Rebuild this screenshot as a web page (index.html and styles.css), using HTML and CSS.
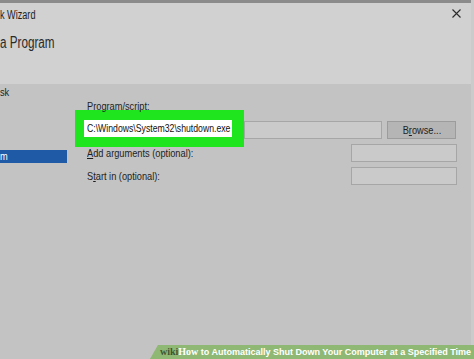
FILE: index.html
```html
<!DOCTYPE html>
<html>
<head>
<title>Create Basic Task Wizard</title>
<link rel="stylesheet" href="styles.css">
</head>
<body>

<div class="wnd">
<div class="wnd_top"></div>
<div class="wnd_hdr">
<div class="wnd_ttl"><span class="sq">k Wizard</span><svg class="wnd_x" width="9" height="9" viewBox="0 0 9 9"><path d="M0.5 0.5L8.5 8.5M8.5 0.5L0.5 8.5" stroke="#2b2b2b" stroke-width="1.1"/></svg></div>
<div class="wnd_h1"><span class="sq">a Program</span></div>
</div>

<div class="wnd_main">
<div class="nav">
<div class="nav_item"><span class="sq">sk</span></div>
<div class="nav_item nav_sel"><span class="sq">m</span></div>
</div>

<div class="frm">
<div class="frm_lbl"><span class="sq">Program/script:</span></div>
<div class="frm_row">
<div class="hl"><div class="hl_fld"><span class="sq">C:\Windows\System32\shutdown.exe</span></div></div>
<div class="fld fld_long"></div>
<div class="btn"><span class="sq sq_c">B<u>r</u>owse...</span></div>
</div>
<div class="frm_row frm_opt">
<div class="frm_lbl2"><span class="sq"><u>A</u>dd arguments (optional):</span></div>
<div class="fld fld_sm"></div>
</div>
<div class="frm_row frm_opt">
<div class="frm_lbl2"><span class="sq">S<u>t</u>art in (optional):</span></div>
<div class="fld fld_sm"></div>
</div>
</div>
</div>
</div>

<div class="wm"><b class="wm_wiki">wiki</b><b class="wm_how">How</b> to Automatically Shut Down Your Computer at a Specified Time</div>

</body>
</html>
```

FILE: styles.css
```css
html, body {margin:0;height:100%;overflow:hidden;}
body {background:#c3c3c3;font-family:"Liberation Sans", sans-serif;font-size:11px;color:#1e1e1e;position:relative;}

/* the screenshot was squeezed sideways, text follows */
.sq {display:inline-block;transform:scaleX(.84);transform-origin:0 50%;white-space:nowrap;}
.sq_c {transform-origin:50% 50%;}

.wnd {height:100%;border-right:3px solid #cbcbcb;box-sizing:border-box;}
.wnd_top {height:3px;background:#8b8b8b;}
.wnd_hdr {height:81px;background:#d1d1d1;}
.wnd_ttl {display:flex;justify-content:space-between;align-items:center;height:24px;padding-right:10px;font-size:12px;}
.wnd_ttl .sq {transform:scaleX(.76);}
.wnd_x {margin-top:-4px;}
.wnd_h1 {font-size:16px;line-height:24px;margin-top:4px;color:#2a2a2a;}
.wnd_h1 .sq {transform:scaleX(.73);}

.wnd_main {display:flex;}
.nav {width:67px;padding-top:2px;}
.nav_item {height:13px;line-height:13px;}
.nav_sel {margin-top:51px;background:#1f5aa6;color:#fff;}

.frm {padding:16px 0 0 8px;flex:1;}
.frm_lbl {margin-left:12px;height:13px;line-height:13px;}
.frm_row {display:flex;align-items:center;}
.frm_lbl + .frm_row {margin-top:-3px;}

.hl {background:#1fe51f;padding:10px 12px 10px 9px;width:148px;}
.hl_fld {background:#fff;height:17px;line-height:17px;padding-left:3px;color:#111;white-space:nowrap;overflow:hidden;}
.hl_fld .sq {transform:scaleX(.79);}

.fld {border:1px solid #a6a6a6;background:#cacaca;box-sizing:border-box;}
.fld_long {width:138px;height:18px;margin-top:2px;}
.btn {width:69px;height:18px;margin:2px 0 0 5px;box-sizing:border-box;border:1px solid #9c9c9c;background:#b5b5b5;text-align:center;line-height:16px;}

.frm_opt {justify-content:space-between;padding-right:14px;height:18px;}
.frm_row + .frm_opt {margin-top:-3px;}
.frm_opt + .frm_opt {margin-top:5px;}
.frm_lbl2 {margin-left:12px;}
.fld_sm {width:106px;height:18px;}

.wm {position:absolute;right:0;bottom:0;height:14px;line-height:14px;padding:0 3px 0 10px;background:#8fb874;color:#fff;font-family:"Liberation Sans", sans-serif;font-size:9px;font-weight:bold;clip-path:polygon(8px 0, 100% 0, 100% 100%, 0 100%);white-space:nowrap;}
.wm_wiki {font-family:"Liberation Serif", serif;color:#3f5533;font-size:10px;}
.wm_how {font-family:"Liberation Serif", serif;font-size:10px;}
```
